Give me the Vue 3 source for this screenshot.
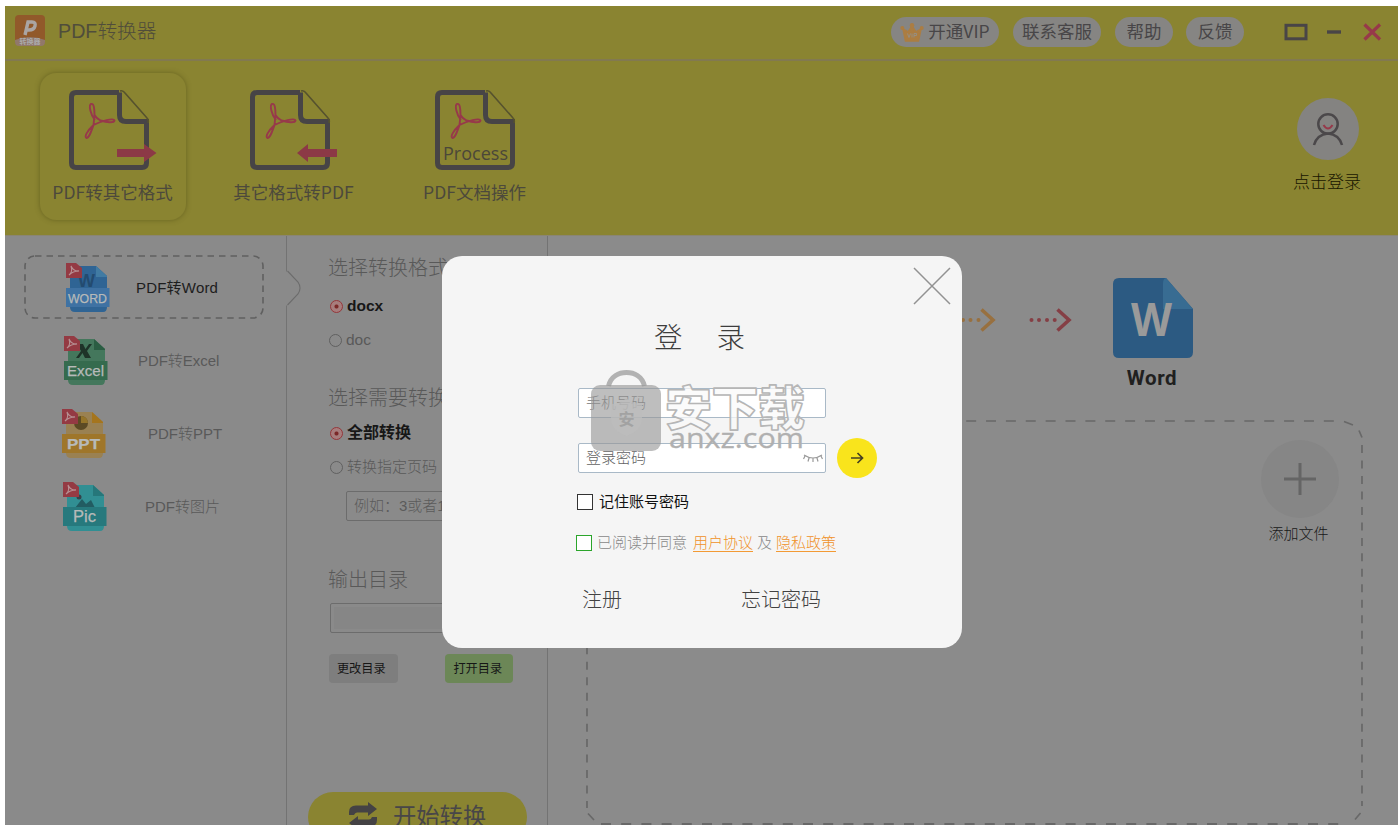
<script setup>
const actions = [
  { text: '开通VIP', cls: 'vip', crown: true },
  { text: '联系客服', cls: 'service' },
  { text: '帮助', cls: 'help' },
  { text: '反馈', cls: 'feedback' },
]
const modes = [
  { label: 'PDF转其它格式', kind: 'out', active: true },
  { label: '其它格式转PDF', kind: 'in' },
  { label: 'PDF文档操作', kind: 'process' },
]
const targets = [
  { label: 'PDF转Word', badge: 'WORD', kind: 'word', page: '#2f6494', fold: '#417ba3', band: '#3f72a3', size: 13, len: 39 },
  { label: 'PDF转Excel', badge: 'Excel', kind: 'excel', page: '#44775c', fold: '#2b5d43', band: '#356b4e', size: 14.5, len: 37 },
  { label: 'PDF转PPT', badge: 'PPT', kind: 'ppt', page: '#9a8152', fold: '#a5751d', band: '#9f762a', size: 14.5, len: 33 },
  { label: 'PDF转图片', badge: 'Pic', kind: 'pic', page: '#318f93', fold: '#26777a', band: '#27797d', size: 16, len: 23 },
]
</script>

<template>
  <div class="window">
    <header class="titlebar">
      <svg class="logo" width="30" height="31" viewBox="0 0 30 31">
        <rect width="30" height="30" rx="4" fill="#91592a" />
        <path d="M0 25Q15 19 30 25V27Q30 31 26 31H4Q0 31 0 27Z" fill="#91786a" />
        <path d="M10 20L13 7H17Q21 7 20 11Q19 15 14 15H11" fill="none" stroke="#aaa5a3" stroke-width="3.4" />
        <text x="15" y="28.5" text-anchor="middle" class="logo-text">转换器</text>
      </svg>
      <div class="app-name">PDF转换器</div>
      <nav class="actions">
        <div v-for="a in actions" :key="a.text" class="pill" :class="a.cls">
          <svg v-if="a.crown" width="24" height="19" viewBox="0 0 24 19">
            <path d="M3 6L8 9L12 3L16 9L21 6L18.5 18H5.5Z" fill="#ab7d42" stroke="#ab7d42" stroke-width="1.5" stroke-linejoin="round" />
            <circle cx="2.3" cy="5" r="2" fill="#ab7d42" /><circle cx="12" cy="2.3" r="2.2" fill="#ab7d42" /><circle cx="21.7" cy="5" r="2" fill="#ab7d42" />
            <path d="M7.500 10.500L9 14.500L10.500 10.500M12 10.500V14.500M14 14.500V10.500H16.500V12.500H14" fill="none" stroke="#949087" stroke-width=".9" />
          </svg>
          <span>{{ a.text }}</span>
        </div>
      </nav>
      <svg class="controls" width="100" height="20" viewBox="0 0 100 20">
        <rect x="2" y="3.3" width="20" height="13.5" fill="none" stroke="#494547" stroke-width="3" />
        <path d="M43 10H57" stroke="#494547" stroke-width="3.4" />
        <path d="M80.5 2.5L96 17.5M96 2.5L80.5 17.5" stroke="#97394a" stroke-width="3.2" />
      </svg>
    </header>

    <section class="ribbon">
      <div v-for="m in modes" :key="m.kind" class="mode" :class="[m.kind, { active: m.active }]">
        <svg class="mode-icon" width="80" height="80" viewBox="0 0 80 80">
          <path d="M50 2.5H7Q2.5 2.5 2.5 7V73Q2.5 77.5 7 77.5H73Q77.5 77.5 77.5 73V31.5H57Q50.5 31.5 50.5 25V2.5" fill="none" stroke="#474446" stroke-width="5" />
          <path d="M51 1Q54 0 56 3L78 28Q80 30 79 33" fill="none" stroke="#56522e" stroke-width="1.6" />
          <g fill="none" stroke="#97394a" stroke-width="1.900" stroke-linejoin="round">
            <path d="M26 30C21.500 25 19.500 15 22 14C25 13 25.500 19 25.500 25L24.500 35C22 42 20 48 17.500 48C15 47 18 41 24.500 35C32 31 45 27.500 45.500 30.500C45 33.500 37 32 31.500 30.500Q27 28 25.500 25" />
          </g>
          <path v-if="m.kind === 'out'" d="M48 59H75V54L87.500 63L75 72V67H48Z" fill="#8c3946" />
          <path v-if="m.kind === 'in'" d="M87 59H58V54L47 63L58 72V67H87Z" fill="#8c3946" />
          <text v-if="m.kind === 'process'" x="8" y="70" textLength="65" class="process-text">Process</text>
        </svg>
        <div class="mode-label">{{ m.label }}</div>
      </div>
      <div class="account">
        <svg width="62" height="62" viewBox="0 0 62 62">
          <circle cx="31" cy="31" r="31" fill="#848381" />
          <circle cx="31" cy="26" r="9.700" fill="none" stroke="#4b484a" stroke-width="2.500" />
          <path d="M17 47Q20 36.500 31 35.500Q42 36.500 45 47" fill="none" stroke="#4b484a" stroke-width="2.500" />
          <path d="M26.500 27Q31 34 35.500 27" fill="none" stroke="#97394a" stroke-width="2" />
        </svg>
        <div class="account-text">点击登录</div>
      </div>
    </section>

    <div class="body">
      <aside class="sidebar">
        <div v-for="(t, i) in targets" :key="t.kind" class="target" :class="t.kind">
          <svg v-if="i === 0" class="dash" width="242" height="66" viewBox="0 0 242 66">
            <rect x="2" y="2" width="238" height="62" rx="10" fill="none" stroke="#606060" stroke-width="1.600" stroke-dasharray="6.500 5" />
          </svg>
          <svg class="file" width="44" height="50" viewBox="0 0 44 50">
            <path d="M4 4Q4 3 5 3H30L41 13V44Q41 49 37 49H9Q4 49 4 44Z" :fill="t.page" />
            <path d="M30 3L41 13V14H30Z" :fill="t.fold" />
            <text v-if="t.kind === 'word'" x="12" y="24" class="mark word-mark">W</text>
            <path v-if="t.kind === 'excel'" d="M13 8H19L21.500 13L25 8H28L23 15L27 22H21L18.500 17L15 22H12L17 15Z" fill="#1e3328" />
            <g v-if="t.kind === 'ppt'"><circle cx="19" cy="14" r="7" fill="#5c4a24" /><path d="M19 14V7A7 7 0 0 1 26 14Z" fill="#957429" /></g>
            <path v-if="t.kind === 'pic'" d="M12 26L19 17L23 22L28 18L32 26Z" fill="#225c62" />
            <circle v-if="t.kind === 'pic'" cx="16" cy="15" r="2.500" fill="#35424a" />
            <path d="M0 25H43.500V44H0Z" :fill="t.band" />
            <path d="M0 0H10L16 5V15H0Z" fill="#943a43" />
            <path d="M5 3Q8 9 13 8Q7 8 3 12Q7 9 5 3" fill="none" stroke="#b79194" stroke-width="1.100" />
            <text x="21.500" y="39.500" text-anchor="middle" :textLength="t.len" lengthAdjust="spacingAndGlyphs" :font-size="t.size" class="badge" :class="{ heavy: t.kind === 'ppt' }">{{ t.badge }}</text>
          </svg>
          <span class="target-label">{{ t.label }}</span>
        </div>
        <svg class="notch" width="18" height="38" viewBox="0 0 18 38">
          <path d="M.5 1.500V35.500" stroke="#8a8a8a" stroke-width="2" />
          <path d="M1.500 1L12 12Q16 18 12 24L1.500 35" fill="none" stroke="#6c6c6c" stroke-width="1.100" />
        </svg>
      </aside>

      <section class="options">
        <h3 class="heading first">选择转换格式</h3>
        <div class="radio on r1"><i></i><span>docx</span></div>
        <div class="radio r2"><i></i><span>doc</span></div>
        <h3 class="heading second">选择需要转换</h3>
        <div class="radio on r3"><i></i><span>全部转换</span></div>
        <div class="radio r4"><i></i><span>转换指定页码</span></div>
        <div class="field range">例如：3或者1</div>
        <h3 class="heading third">输出目录</h3>
        <div class="field path"></div>
        <div class="buttons">
          <div class="btn">更改目录</div>
          <div class="btn green">打开目录</div>
        </div>
        <div class="start">
          <svg width="30" height="28" viewBox="0 0 30 28">
            <path d="M1 13V10Q1 3.500 8 3.500H20V0L29 7L20 14V10.500H9Q7 10.500 6 13Z" fill="#444244" />
            <path d="M29 15V18Q29 24.500 22 24.500H10V28L1 21L10 14V17.500H21Q23 17.500 24 15Z" fill="#444244" />
          </svg>
          <span>开始转换</span>
        </div>
      </section>

      <main class="main">
        <div class="flow">
          <svg class="arrows" width="110" height="24" viewBox="0 0 110 24">
            <g fill="#98703f"><circle cx="3" cy="12" r="2" /><circle cx="10.500" cy="12" r="2" /><circle cx="18.500" cy="12" r="2" /></g>
            <path d="M21.500 1.500L33 12L21.500 22.500" fill="none" stroke="#98703f" stroke-width="3.600" />
            <g fill="#853f45"><circle cx="71.500" cy="12" r="2" /><circle cx="79" cy="12" r="2" /><circle cx="87" cy="12" r="2" /><circle cx="94.700" cy="12" r="2" /></g>
            <path d="M97.500 1.500L109 12L97.500 22.500" fill="none" stroke="#853f45" stroke-width="3.600" />
          </svg>
          <div class="result">
            <svg width="80" height="80" viewBox="0 0 80 80">
              <path d="M6 0H53L80 31V74Q80 80 74 80H6Q0 80 0 74V6Q0 0 6 0Z" fill="#2c5a82" />
              <path d="M53 0L80 31H50V6Q50 0 53 0Z" fill="#386c92" />
              <text x="18" y="58" textLength="41" lengthAdjust="spacingAndGlyphs" class="big-w">W</text>
            </svg>
            <div class="result-text">Word</div>
          </div>
        </div>
        <div class="drop">
          <svg class="drop-line" width="780" height="406" viewBox="0 0 780 406">
            <g fill="none" stroke="#686868" stroke-width="1.700">
              <path d="M23.500 1H756" stroke-dasharray="10 9.870" />
              <path d="M759 1.500L768 5M774 10.500L777 17.500" />
              <path d="M777 25V386" stroke-dasharray="8 7.480" />
              <path d="M775.500 393L770 399.500M3 393.500L9 400" />
              <path d="M2 25V388" stroke-dasharray="8 7.480" />
              <path d="M16 404.500H762" stroke-dasharray="10 10.200" stroke-width="3" />
            </g>
          </svg>
          <div class="add">
            <svg width="80" height="80" viewBox="0 0 80 80">
              <circle cx="40" cy="40" r="39" fill="#868686" />
              <path d="M24 40H56M40 24V56" stroke="#656565" stroke-width="3" />
            </svg>
            <div>添加文件</div>
          </div>
        </div>
      </main>
    </div>

    <div class="modal">
      <svg class="close" width="38" height="38" viewBox="0 0 38 38"><path d="M1 1L37 37M37 1L1 37" stroke="#929292" stroke-width="1.500" /></svg>
      <h2 class="login-title"><span>登</span><span>录</span></h2>
      <div class="input phone"><span>手机号码</span></div>
      <div class="password-row">
        <div class="input">
          <span>登录密码</span>
          <svg width="20" height="10" viewBox="0 0 20 10"><path d="M1 2Q10 8 19 2M2 3L.5 6M6 5L5 8.500M10 5.500V9M14 5L15 8.500M18 3L19.500 6" fill="none" stroke="#999" stroke-width="1.200" /></svg>
        </div>
        <div class="go"><svg width="14" height="14" viewBox="0 0 14 14"><path d="M1 7H12M7.500 2L12.500 7L7.500 12" fill="none" stroke="#453f22" stroke-width="1.700" /></svg></div>
      </div>
      <div class="check remember"><i></i><span>记住账号密码</span></div>
      <div class="check agree"><i></i><span>已阅读并同意</span><a>用户协议</a><em>及</em><a>隐私政策</a></div>
      <div class="links"><span>注册</span><span>忘记密码</span></div>
      <svg class="watermark" width="220" height="90" viewBox="0 0 220 90">
        <path d="M18.500 18C21 8 29 4.500 36.500 4.500S52 8 54.500 18" fill="none" stroke="#b2b2b2" stroke-width="5" />
        <rect x="1" y="17" width="70" height="66" rx="9" fill="#969696" fill-opacity=".62" />
        <path d="M21 36Q30 36 36.500 30Q44 36 52 36V51Q52 62 36.500 68Q21 62 21 51Z" fill="#bcbcbc" fill-opacity=".75" />
        <text x="36.500" y="57" text-anchor="middle" class="shield-text">安</text>
        <text x="75" y="56.500" textLength="140" class="wm-cn">安下载</text>
        <text x="79" y="79.500" textLength="135" lengthAdjust="spacingAndGlyphs" class="wm-en">anxz.com</text>
      </svg>
    </div>
  </div>
</template>

<style>
html, body { margin: 0; overflow: hidden; background: #fff; }
</style>

<style scoped>
* { box-sizing: border-box; }
.window { position: relative; width: 1393px; height: 819px; margin: 6px 0 0 5px; overflow: hidden; display: flex; flex-direction: column; background: #8a8a8a; font-family: "Liberation Sans", "Noto Sans CJK SC", sans-serif; color: #484648; white-space: nowrap; }
.titlebar { flex: none; height: 55px; display: flex; background: #8a8431; border-bottom: 2px solid #827951; }
.logo { margin: 9px 0 0 10px; }
.logo-text { font: 700 7px "Noto Sans CJK SC", sans-serif; fill: #aaa; }
.app-name { margin: 10px 0 0 13px; font-size: 19.700px; line-height: 30px; font-weight: 300; color: #504d3b; }
.actions { display: flex; margin: 11px 0 0 auto; }
.pill { height: 30px; border-radius: 15px; background: #868583; display: flex; align-items: center; justify-content: center; font: 17.500px/30px "Noto Sans CJK SC", sans-serif; }
.pill span { position: relative; top: -1px; }
.vip { width: 108px; gap: 4px; margin-right: 14px; }
.service { width: 88px; margin-right: 14px; }
.help { width: 58px; margin-right: 13px; }
.feedback { width: 58px; }
.controls { margin: 16px 14px 0 40px; }

.ribbon { flex: none; height: 174px; display: flex; gap: 35px; padding: 12px 0 0 35px; background: #8a8431; }
.mode { width: 146px; height: 147px; padding-top: 17px; }
.active { border-radius: 16px; box-shadow: 0 0 5px rgba(70, 65, 15, .5); }
.mode-icon { display: block; margin-left: 29px; overflow: visible; }
.process .mode-icon { margin-left: 33px; }
.mode-label { margin-top: 8px; text-align: center; padding-right: 1px; font: 17.500px/27px "Noto Sans CJK SC", sans-serif; color: #4c493c; }
.process-text { font: 18px "Open Sans", sans-serif; fill: #4b4739; }
.account { margin: 25px 36px 0 auto; width: 70px; text-align: center; }
.account svg { display: block; margin: 0 auto; position: relative; left: .5px; }
.account-text { margin-top: 9px; font: 300 17px/24px "Noto Sans CJK SC", sans-serif; color: #171500; }

.body { flex: 1; display: flex; min-height: 0; border-top: 1px solid #8a8573; }
.sidebar { position: relative; width: 282px; flex: none; padding-top: 19px; border-right: 1px solid #737373; }
.target { position: relative; height: 73px; display: flex; padding-top: 8px; color: #595959; }
.dash { position: absolute; left: 18px; top: -1px; }
.file { flex: none; display: block; }
.word .file { margin-left: 60.500px; } .excel .file { margin-left: 59px; } .ppt .file { margin-left: 57px; } .pic .file { margin-left: 58px; }
.target-label { margin-top: 12px; font-size: 15px; line-height: 26px; font-weight: 300; }
.word .target-label { margin-left: 26.500px; color: #1d1d1d; font-weight: 400; letter-spacing: .2px; } .excel .target-label { margin-left: 30px; letter-spacing: -.05px; } .ppt .target-label { margin-left: 42px; } .pic .target-label { margin-left: 38px; }
.badge { font-family: "Liberation Sans", sans-serif; fill: #b7bab9; stroke: #b7bab9; stroke-width: .25; }
.heavy { font-weight: 700; }
.mark { font: 700 18px "Liberation Sans", sans-serif; fill: #234b70; }
.notch { position: absolute; left: 281px; top: 34px; z-index: 2; }

.options { width: 261px; flex: none; border-right: 1px solid #737373; display: flex; flex-direction: column; align-items: flex-start; padding-left: 41px; }
.options > * { flex-shrink: 0; }
.heading { margin: 0; height: 30px; font: 300 20px/30px "Noto Sans CJK SC", sans-serif; color: #595959; }
.first { margin-top: 16px; } .second { margin-top: 30px; } .third { margin-top: 43px; }
.radio { height: 24px; display: flex; align-items: center; gap: 4px; font-size: 15px; line-height: 24px; color: #595959; font-weight: 300; }
.radio i { width: 13px; height: 13px; border: 1px solid #606060; border-radius: 50%; }
.on { color: #171717; font-weight: 700; }
.on i { border: 1.500px solid #96363a; background: radial-gradient(circle, #7b2929 0 1.500px, #a77d7d 2.500px); }
.r1 { margin: 12px 0 0 2px; font-size: 15.500px; } .r2 { margin: 10px 0 0 1px; font-size: 15.500px; } .r3 { margin: 9px 0 0 2px; font-size: 16px; } .r4 { margin: 10px 0 0 2px; }
.field { height: 30px; border: 1px solid #6c6c6c; border-radius: 2px; font-size: 15px; line-height: 27px; padding-left: 7px; color: #5b5b5b; font-weight: 300; }
.range { width: 167px; margin: 12px 0 0 18px; } .path { width: 184px; margin: 9px 0 0 2px; box-shadow: inset 0 0 0 3px #8a8a8a; background: #868686; }
.buttons { display: flex; gap: 47px; margin: 21px 0 0 1px; }
.btn { width: 68.500px; height: 29px; border-radius: 4px; background: #7e7e7e; color: #161616; text-align: center; font: 12.200px/29px "Noto Sans CJK SC", sans-serif; padding-right: 4px; }
.green { background: #6c8757; padding-right: 2px; }
.start { width: 219px; height: 50px; margin: 109px 0 0 -20px; border-radius: 26px; background: #8a8431; display: flex; padding: 10px 0 0 40px; gap: 15px; font: 23.300px/27px "Noto Sans CJK SC", sans-serif; }
.start svg { flex: none; }

.main { flex: 1; display: flex; flex-direction: column; background: #8b8b8b; }
.flow { height: 184px; display: flex; padding: 42px 0 0 412px; }
.arrows { margin-top: 30px; overflow: visible; }
.result { width: 80px; margin-left: 43px; text-align: center; }
.result svg { display: block; }
.big-w { font: 700 46px "Open Sans", sans-serif; fill: #9a9a9a; }
.result-text { font: 500 20.500px/28px Roboto, sans-serif; letter-spacing: .6px; margin-top: 6px; padding-right: 2px; font-weight: 700; color: #202020; }
.drop { position: relative; height: 406px; margin-left: 37px; }
.drop-line { position: absolute; left: 0; top: 0; }
.add { width: 80px; margin: 19px 0 0 675px; font: 300 15px/22px "Noto Sans CJK SC", sans-serif; color: #181818; text-align: center; }
.add svg { display: block; margin-bottom: 3px; }
.add div { padding-right: 3px; }

.modal { position: absolute; left: 437px; top: 250px; width: 520px; height: 392px; border-radius: 20px; background: #f5f5f5; padding: 63px 0 0 134px; z-index: 5; }
.close { position: absolute; left: 471px; top: 11px; }
.login-title { margin: 0 0 0 78px; height: 36px; display: flex; gap: 34px; font: 300 28.500px/34px "Noto Sans CJK SC", sans-serif; color: #3d3d3d; }
.input { width: 248px; height: 30px; margin-left: 2px; border: 1px solid #a9b9c7; border-radius: 2px; background: #fff; display: flex; align-items: center; padding-left: 7px; font-size: 15px; font-weight: 300; color: #626262; }
.input span { position: relative; top: -2px; }
.phone { margin-top: 33px; color: #777; }
.input svg { margin-left: auto; margin-right: 2px; }
.password-row { display: flex; margin-top: 20px; align-items: center; height: 40px; }
.go { width: 40px; height: 40px; border-radius: 50%; background: #f9e41c; margin-left: 11px; display: flex; align-items: center; justify-content: center; }
.check { display: flex; align-items: center; height: 20px; font-size: 15px; line-height: 20px; }
.check i { width: 16px; height: 16px; border: 1px solid #333; background: #fff; margin-right: 6px; }
.remember { margin: 14px 0 0 1px; color: #111; }
.agree { margin-top: 21px; color: #888; font-weight: 300; }
.agree i { border-color: #2ba52b; margin-right: 5px; }
.agree a { color: #f09128; border-bottom: 1px solid #f39a34; height: 18px; margin-left: 6px; line-height: 18px; }
.agree em { font-style: normal; margin-left: 4px; margin-right: -2px; }
.links { display: flex; gap: 119px; margin: 31px 0 0 6px; font: 300 20px/30px "Noto Sans CJK SC", sans-serif; color: #424242; }
.watermark { position: absolute; left: 148px; top: 112px; }
.shield-text { font: 700 16px "Noto Sans CJK SC", sans-serif; fill: #a2a2a2; }
.wm-cn { font: 900 47px "Noto Sans CJK SC", sans-serif; fill: #fafafa; fill-opacity: .75; stroke: #b6b6b6; stroke-width: 1.600; stroke-linejoin: round; }
.wm-en { font: 28px "Open Sans", sans-serif; fill: #b0b0b0; stroke: #b0b0b0; stroke-width: .3; }
</style>
